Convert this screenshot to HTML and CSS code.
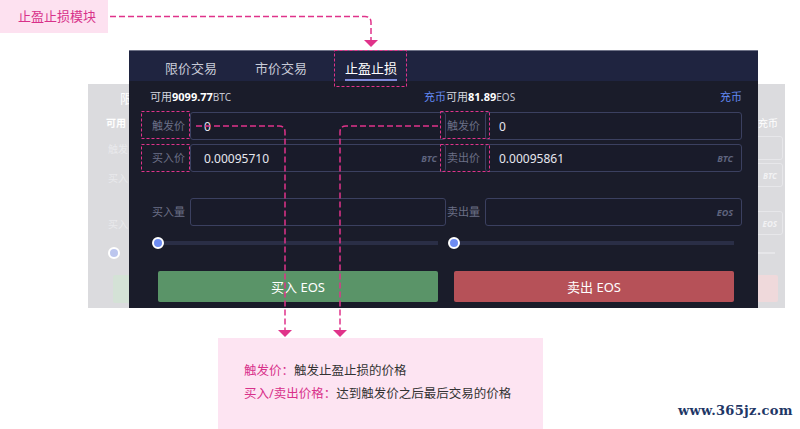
FILE: index.html
```html
<!DOCTYPE html>
<html lang="zh">
<head>
<meta charset="utf-8">
<title>止盈止损模块</title>
<link rel="stylesheet" href="styles.css">
</head>
<body>
<div class="canvas">
  <div class="tag">止盈止损模块</div>

  <div class="ghost">
    <div class="ghost-col">
      <span class="g-tab">限</span>
      <span class="g-avail">可用</span>
      <span class="g-lbl g-l1">触发</span>
      <span class="g-lbl g-l2">买入</span>
      <span class="g-lbl g-l3">买入</span>
      <span class="g-knob"></span>
      <span class="g-btn g-buy"></span>
    </div>
    <div class="ghost-col ghost-right">
      <span class="g-avail g-dep">充币</span>
      <span class="g-box g-b1"></span>
      <span class="g-box g-b2">BTC</span>
      <span class="g-box g-b3">EOS</span>
      <span class="g-track"></span>
      <span class="g-btn g-sell"></span>
    </div>
  </div>

  <div class="panel">
    <div class="tabs">
      <span class="tab">限价交易</span>
      <span class="tab">市价交易</span>
      <span class="tab active">止盈止损</span>
    </div>
    <div class="body">
      <div class="col">
        <div class="bal"><span>可用<b>9099.77</b><small>BTC</small></span><a class="dep">充币</a></div>
        <div class="row"><span class="lbl">触发价</span><div class="inp"><span>0</span></div></div>
        <div class="row row-2"><span class="lbl">买入价</span><div class="inp"><span>0.00095710</span><i>BTC</i></div></div>
        <div class="row"><span class="lbl">买入量</span><div class="inp"></div></div>
        <div class="slider"><span class="knob"></span></div>
        <button class="btn buy">买入 EOS</button>
      </div>
      <div class="col col-r">
        <div class="bal"><span>可用<b>81.89</b><small>EOS</small></span><a class="dep">充币</a></div>
        <div class="row"><span class="lbl">触发价</span><div class="inp"><span>0</span></div></div>
        <div class="row row-2"><span class="lbl">卖出价</span><div class="inp"><span>0.00095861</span><i>BTC</i></div></div>
        <div class="row"><span class="lbl">卖出量</span><div class="inp"><span></span><i>EOS</i></div></div>
        <div class="slider"><span class="knob"></span></div>
        <button class="btn sell">卖出 EOS</button>
      </div>
    </div>
  </div>

  <svg class="marks" width="800" height="429" viewBox="0 0 800 429">
    <g fill="none" stroke="#e0338a" stroke-width="1.5" stroke-dasharray="6 3">
      <path d="M110 16.5 H365 Q371 16.5 371 22.5 V40"/>
      <path d="M196 126 H279 Q285 126 285 132 V330"/>
      <path d="M438 126 H346 Q340 126 340 132 V330"/>
    </g>
    <g fill="none" stroke="#e0338a" stroke-width="1" stroke-dasharray="3 2">
      <rect x="334.5" y="50.5" width="72" height="36"/>
      <rect x="141.5" y="111.5" width="48" height="27"/>
      <rect x="141.5" y="144.5" width="48" height="27"/>
      <rect x="440.5" y="111.5" width="49" height="27"/>
      <rect x="440.5" y="144.5" width="49" height="27"/>
    </g>
    <g fill="#e0338a">
      <polygon points="364,40 378,40 371,47"/>
      <polygon points="278,330 292,330 285,337"/>
      <polygon points="333,330 347,330 340,337"/>
    </g>
  </svg>

  <div class="note">
    <p><em>触发价：</em>触发止盈止损的价格</p>
    <p><em>买入/卖出价格：</em>达到触发价之后最后交易的价格</p>
  </div>

  <div class="wm">www.365jz.com</div>
</div>
</body>
</html>
```

FILE: styles.css
```css
* { box-sizing: border-box; }
html, body { margin: 0; padding: 0; background: #fff; }
body {
  font-family: "Noto Sans", "Noto Sans CJK SC", sans-serif;
  width: 800px;
  height: 429px;
  overflow: hidden;
}
.canvas { position: relative; width: 800px; height: 429px; }

.tag {
  position: absolute; left: 0; top: 0;
  width: 108px; height: 33px;
  background: #fde1f0;
  color: #d8318a;
  font-size: 13px;
  line-height: 33px;
  padding-left: 18px;
}

/* ghost panel behind */
.ghost {
  position: absolute; left: 88px; top: 84px;
  width: 697px; height: 224px;
  background: #dbdbde;
  display: flex; justify-content: space-between;
}
.ghost-col { display: flex; flex-direction: column; align-items: flex-start; padding-left: 18px; width: 60px; }
.ghost-right { align-items: flex-end; padding-left: 0; padding-right: 2px; }
.g-tab { font-size: 13px; line-height: 16px; color: #fff; margin: 6px 0 0 14px; }
.g-avail { font-size: 10px; line-height: 14px; font-weight: 700; color: #fff; margin-top: 10px; }
.g-dep { margin-top: 32px; margin-right: 5px; font-weight: 400; }
.g-lbl { font-size: 10px; line-height: 14px; color: #e9e9ec; margin-left: 2px; }
.g-l1 { margin-top: 12px; }
.g-l2 { margin-top: 15px; }
.g-l3 { margin-top: 32px; }
.g-knob {
  width: 12px; height: 12px; border-radius: 50%;
  background: #bcc6ee; border: 2px solid #fff;
  margin: 16px 0 0 2px;
}
.g-btn { height: 28px; width: 40px; border-radius: 2px; }
.g-buy { background: #d4e2d6; margin: 16px 0 0 7px; }
.g-sell { background: #efd9db; margin: 21px 5px 0 0; height: 27px; }
.g-box {
  width: 40px; height: 24px;
  border: 1px solid #e7e7ea; border-radius: 3px;
  font-size: 8px; font-style: italic; font-weight: 700; color: #f2f2f4;
  display: flex; align-items: center; justify-content: flex-end; padding-right: 5px;
}
.g-b1 { margin-top: 6px; }
.g-b2 { margin-top: 3px; }
.g-b3 { margin-top: 24px; }
.g-track { width: 30px; height: 2px; background: #e6e6e9; margin: 17px 8px 0 0; }

/* main panel */
.panel {
  position: absolute; left: 129px; top: 50px;
  width: 629px; height: 258px;
  border-top: 1px solid #6f7388;
  background: #1a1c2a;
}
.tabs {
  height: 30px;
  background: #1f2440;
  display: flex; gap: 38px;
  padding-left: 36px;
}
.tab {
  font-size: 13px; line-height: 16px;
  padding-top: 9px;
  color: #c9ccd9;
  height: 30px;
}
.tab.active { color: #fff; border-bottom: 2px solid #7e8ad9; }

.body {
  display: grid;
  grid-template-columns: 296px 296px;
  padding: 9px 16px 6px 21px;
}
.col { display: flex; flex-direction: column; }
.bal {
  height: 14px; line-height: 14px;
  font-size: 11px; color: #d3d5df;
  display: flex; justify-content: space-between;
  margin-bottom: 8px;
}
.bal b { color: #fff; font-weight: 700; }
.bal small { font-size: 10px; color: #c3c5d0; }
.dep { color: #6288f2; }
.row { display: flex; height: 28px; margin-bottom: 4px; }
.row-2 { margin-bottom: 26px; }
.lbl {
  width: 40px; flex: none;
  font-size: 11px; color: #6b6f86;
  text-align: right; padding-right: 5px;
  line-height: 28px;
}
.col-r .lbl { width: 39px; }
.inp {
  flex: 1;
  border: 1px solid #3b4060;
  border-radius: 3px;
  background: #191b2a;
  display: flex; align-items: center; justify-content: space-between;
  padding: 0 8px 0 13px;
  font-size: 12px; color: #e6e7ef;
}
.inp i { font-size: 9px; font-weight: 700; color: #5f647e; }

.slider {
  margin: 7px 8px 0;
  height: 12px;
  background: linear-gradient(#0000 4px, #2a2e46 4px, #2a2e46 8px, #0000 8px);
  display: flex; align-items: center;
}
.knob {
  width: 12px; height: 12px; border-radius: 50%;
  background: #6e8cf2; border: 2px solid #fff;
  margin-left: -6px;
}
.btn {
  margin: 22px 8px 0;
  height: 31px;
  border: 0; border-radius: 2px;
  color: #fff;
  font-family: inherit; font-size: 13px;
}
.buy { background: #5a9468; }
.sell { background: #b65158; }

.marks { position: absolute; left: 0; top: 0; pointer-events: none; }

.note {
  position: absolute; left: 218px; top: 338px;
  width: 325px; height: 91px;
  background: #fde4f2;
  padding: 21px 0 0 26px;
  font-size: 12.5px; color: #333;
}
.note p { margin: 0; line-height: 23px; }
.note em { font-style: normal; color: #d8318a; }

.wm {
  position: absolute; left: 678px; top: 403px;
  font-family: "DejaVu Serif", serif;
  font-size: 13px; font-weight: 700; color: #1e3766;
  letter-spacing: 0.3px;
}
```
